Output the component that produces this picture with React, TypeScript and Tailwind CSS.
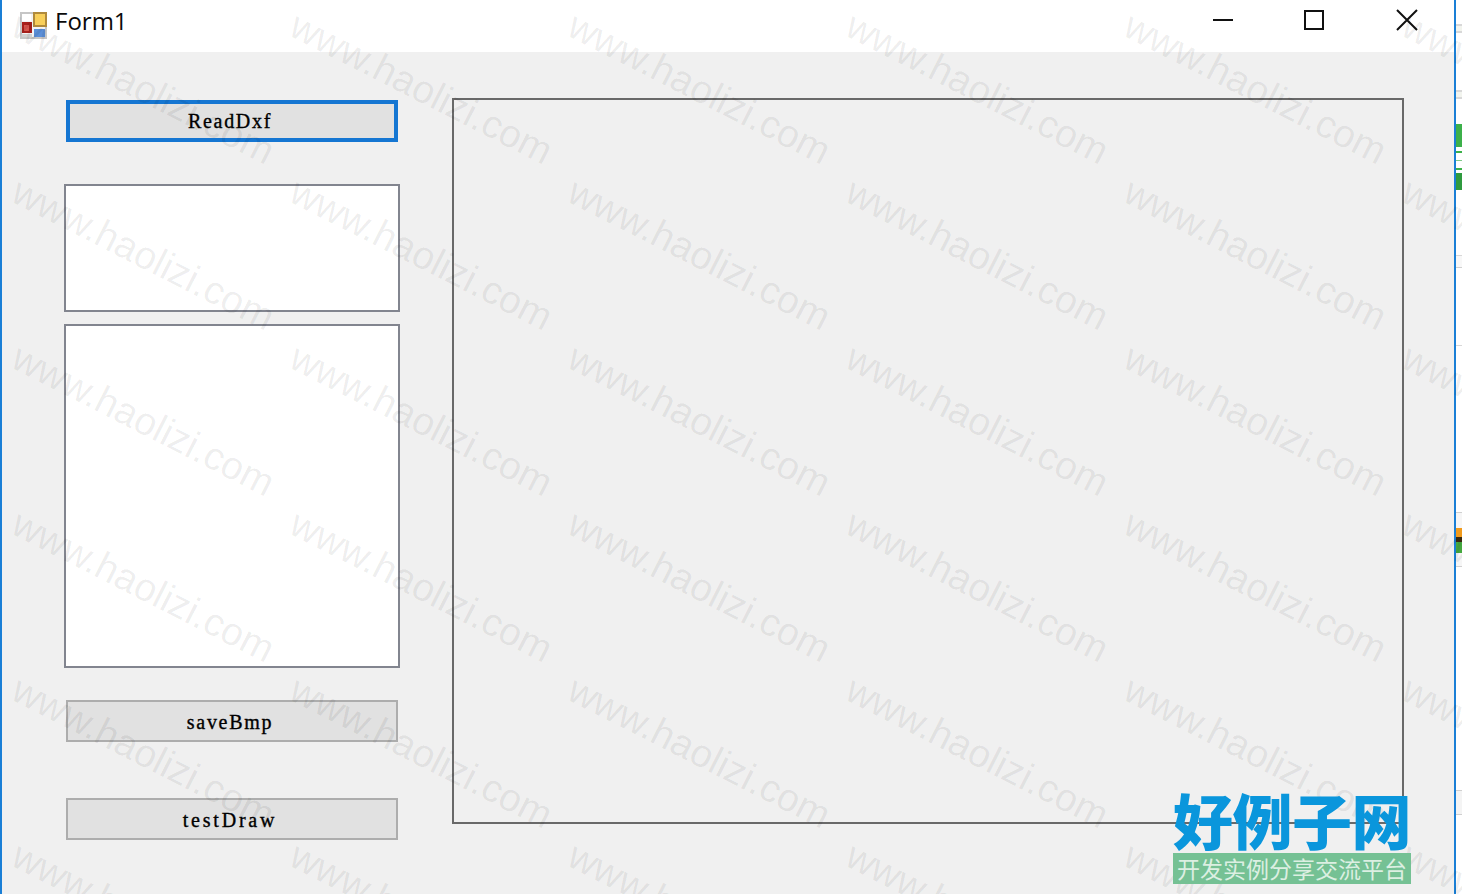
import React from "react";

const marks = Array.from({ length: 36 }, (_, i) => i);

function FormIcon() {
  return (
    <svg width="28" height="28" viewBox="0 0 28 28" className="shrink-0">
      <rect x="0" y="0" width="27" height="27" fill="#c6c6c6" />
      <rect x="2" y="2" width="23" height="23" fill="#f4f4f4" />
      <rect x="2" y="2" width="9" height="7" fill="#ffffff" />
      <rect x="13" y="0" width="14" height="15" fill="#b08a3c" />
      <rect x="15" y="2" width="10" height="11" fill="#f8cf5a" />
      <rect x="2" y="10" width="10" height="11" fill="#a8201c" />
      <rect x="4" y="13" width="5" height="6" fill="#d8554c" />
      <rect x="14" y="17" width="11" height="8" fill="#5b8fd8" />
      <rect x="2" y="22" width="10" height="3" fill="#d0d0d0" />
    </svg>
  );
}

function WinButton({ children, shift }: { children: React.ReactNode; shift?: boolean }) {
  return (
    <div className={shift ? "flex h-[40px] w-[92px] items-center justify-center pr-[2px]" : "flex h-[40px] w-[92px] items-center justify-center"}>
      {children}
    </div>
  );
}

function FormButton({ label, focused, wide }: { label: string; focused?: boolean; wide?: boolean }) {
  const border = focused ? "border-4 border-[#1576d2]" : "border-2 border-[#adadad] pt-[1px]";
  const spacing = wide ? "tracking-[2.8px]" : "tracking-[1.7px]";
  return (
    <div className={`flex h-[42px] w-[332px] items-center justify-center ${border} bg-[#e1e1e1] pr-[4px]`}>
      <span className={`text-[20px] leading-none text-black [-webkit-text-stroke:0.35px_black] [font-family:'Liberation_Serif',serif] ${spacing}`}>{label}</span>
    </div>
  );
}

function Strip() {
  return (
    <div className="flex h-[894px] w-[6px] shrink-0 flex-col bg-white">
      <div className="h-[24px]" />
      <div className="h-[9px] border-y-2 border-[#d8d8d8] bg-[#f2f4ee]" />
      <div className="h-[57px]" />
      <div className="h-[9px] border-y-2 border-[#d8d8d8] bg-[#f2f4ee]" />
      <div className="h-[25px]" />
      <div className="flex h-[66px] flex-col bg-[#3cb04a]">
        <div className="h-[23px]" />
        <div className="flex h-[26px] flex-col justify-around bg-white">
          <div className="h-[2px] bg-[#3cb04a]" />
          <div className="h-[1px] bg-[#7fc98a]" />
          <div className="h-[2px] bg-[#3cb04a]" />
        </div>
        <div className="h-[17px] bg-[#2f9a3f]" />
      </div>
      <div className="h-[65px]" />
      <div className="h-[1px] bg-[#d8d8d8]" />
      <div className="h-[11px] bg-[#f8f8f8]" />
      <div className="h-[1px] bg-[#d0d0d0]" />
      <div className="h-[77px]" />
      <div className="h-[1px] bg-[#d8d8d8]" />
      <div className="h-[166px]" />
      <div className="h-[1px] bg-[#d0d0d0]" />
      <div className="h-[15px] bg-[#f6f6f6]" />
      <div className="h-[9px] bg-[#f09a1c]" />
      <div className="h-[5px] bg-[#3a2a10]" />
      <div className="h-[11px] bg-[#45a83f]" />
      <div className="h-[13px] bg-[#f6f6f6]" />
      <div className="h-[1px] bg-[#d0d0d0]" />
      <div className="h-[223px]" />
      <div className="h-[1px] bg-[#d0d0d0]" />
      <div className="h-[23px] bg-[#f4f4f4]" />
      <div className="h-[1px] bg-[#d0d0d0]" />
    </div>
  );
}

export default function App() {
  return (
    <div className="relative flex h-[894px] w-[1462px] overflow-hidden bg-white">
      <div className="flex h-[894px] w-[1456px] shrink-0 flex-col border-x-2 border-[#1a7fd6] bg-[#f0f0f0]">
        <div className="flex h-[52px] shrink-0 items-center bg-white pl-[18px]">
          <FormIcon />
          <span className="ml-[7px] mt-[-11px] text-[24px] text-[#0a0a0a] [font-family:'Open_Sans',sans-serif]">Form1</span>
          <div className="ml-auto mr-[1px] mt-[-12px] flex">
            <WinButton>
              <div className="h-[2px] w-[20px] bg-[#111]" />
            </WinButton>
            <WinButton shift>
              <div className="h-[20px] w-[20px] border-2 border-[#111]" />
            </WinButton>
            <WinButton>
              <svg width="22" height="22" viewBox="0 0 22 22" fill="none" stroke="#111" strokeWidth="2">
                <path d="M1 1 L21 21 M21 1 L1 21" />
              </svg>
            </WinButton>
          </div>
        </div>
        <div className="flex flex-1">
          <div className="ml-[62px] flex w-[336px] shrink-0 flex-col items-center pt-[48px]">
            <FormButton label="ReadDxf" focused />
            <div className="mt-[42px] h-[128px] w-[336px] border-2 border-[#82858f] bg-white" />
            <div className="mt-[12px] h-[344px] w-[336px] border-2 border-[#82858f] bg-white" />
            <div className="mt-[32px]">
              <FormButton label="saveBmp" />
            </div>
            <div className="mt-[56px]">
              <FormButton label="testDraw" wide />
            </div>
          </div>
          <div className="ml-[52px] mt-[46px] h-[726px] w-[952px] border-2 border-[#696969]" />
        </div>
      </div>
      <Strip />

      <div className="pointer-events-none absolute left-[14px] top-[20px] grid grid-cols-[repeat(6,278px)] grid-rows-[repeat(6,166px)]">
        {marks.map((i) => (
          <div key={i} className="h-[166px] w-[278px]">
            <span className="block w-max origin-top-left translate-x-[10px] translate-y-[-15px] rotate-[27deg] text-[39px] leading-none text-[#00000012] [font-family:'Liberation_Sans',sans-serif]">
              www.haolizi.com
            </span>
          </div>
        ))}
      </div>

      <div className="absolute left-[1173px] top-[785px] flex w-[238px] flex-col">
        <div className="h-[68px] whitespace-nowrap text-[60px] font-black leading-[68px] tracking-[-0.5px] text-[#0a96dc] [font-family:'Noto_Sans_CJK_SC',sans-serif]">
          好例子网
        </div>
        <div className="flex h-[31px] items-center justify-center whitespace-nowrap bg-[#75c194] text-[23px] leading-none text-[#dcefe2] [font-family:'Noto_Sans_CJK_SC',sans-serif]">
          开发实例分享交流平台
        </div>
      </div>
    </div>
  );
}
